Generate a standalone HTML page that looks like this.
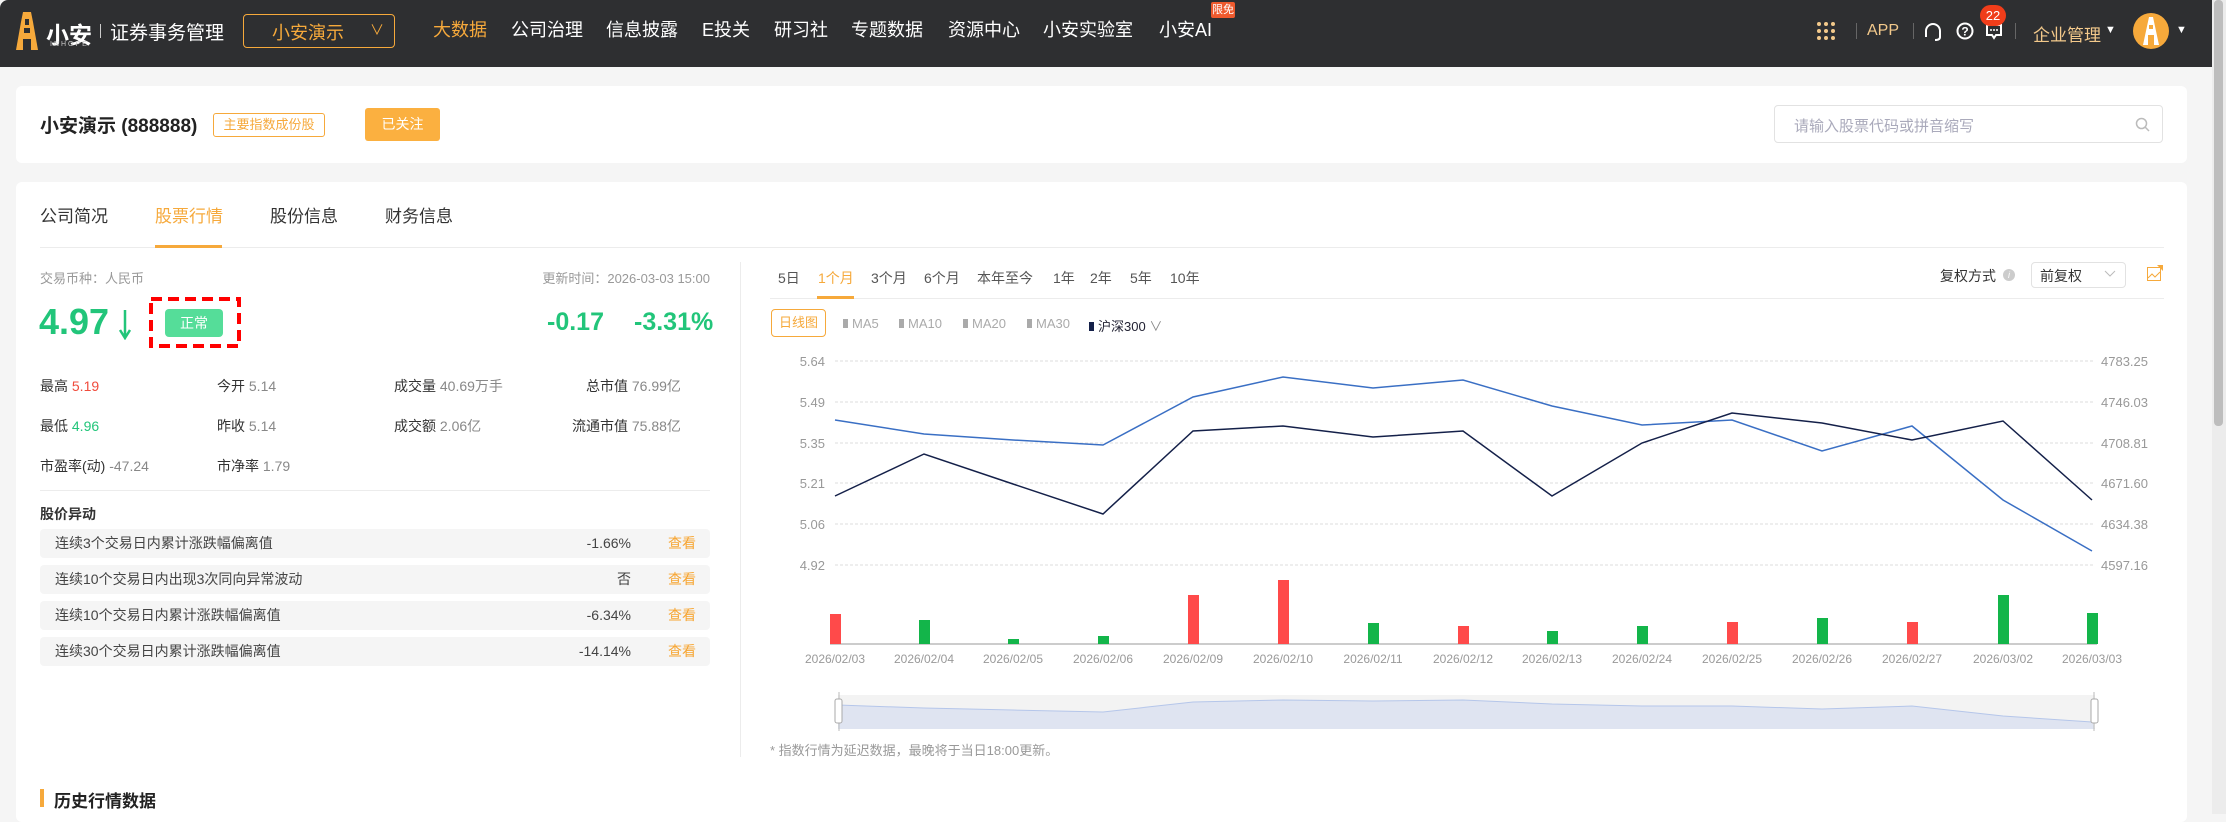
<!DOCTYPE html>
<html><head><meta charset="utf-8">
<style>
*{margin:0;padding:0;box-sizing:border-box}
body{width:2226px;height:814px;overflow:hidden;background:#f5f5f5;font-family:"Liberation Sans","Noto Sans CJK SC",sans-serif;position:relative;color:#333}
.a{position:absolute;white-space:nowrap}
.nav{position:absolute;left:0;top:0;width:2212px;height:67px;background:#2e2f31;border-radius:8px 0 0 0}
.ni{position:absolute;top:18px;font-size:18px;color:#fff;line-height:24px}
.card{position:absolute;background:#fff;border-radius:6px}
.row{position:absolute;left:40px;width:670px;height:29px;background:#f5f5f5;border-radius:4px;font-size:14px;color:#444;line-height:29px}
.row .t{position:absolute;left:15px}
.row .v{position:absolute;right:79px}
.row .k{position:absolute;right:14px;color:#f7a531}
.st{font-size:14px;color:#333;line-height:18px}
.gy{color:#888}
</style></head><body>
<div class="nav"></div>
<svg class="a" style="left:16px;top:12px" width="22" height="38" viewBox="0 0 22 38"><path d="M7 0h8l2 10 5 28H0L5 10z" fill="#f6a93b"/><rect x="9" y="7" width="4" height="6" fill="#2e2f31"/><rect x="8" y="16" width="6" height="5" fill="#2e2f31"/><rect x="7" y="27" width="8" height="11" fill="#2e2f31"/></svg>
<div class="a" style="left:46px;top:16px;font-size:23px;font-weight:bold;color:#fff">小安</div>
<div class="a" style="left:50px;top:41px;font-size:7px;color:#ccc;letter-spacing:2px">INHOPE</div>
<div class="a" style="left:100px;top:24px;width:1px;height:14px;background:#ccc"></div>
<div class="a" style="left:110px;top:18px;font-size:19px;color:#fff">证券事务管理</div>
<div class="a" style="left:243px;top:14px;width:152px;height:34px;border:1px solid #f6a93b;border-radius:4px"></div>
<div class="a" style="left:272px;top:19px;font-size:18px;color:#f6a93b">小安演示</div>
<div class="a" style="left:370px;top:20px;font-size:14px;color:#f6a93b">∨</div>
<div class="ni" style="left:433px;color:#f6a93b">大数据</div>
<div class="ni" style="left:511px">公司治理</div>
<div class="ni" style="left:606px">信息披露</div>
<div class="ni" style="left:702px">E投关</div>
<div class="ni" style="left:774px">研习社</div>
<div class="ni" style="left:851px">专题数据</div>
<div class="ni" style="left:948px">资源中心</div>
<div class="ni" style="left:1043px">小安实验室</div>
<div class="ni" style="left:1159px">小安AI</div>
<div class="a" style="left:1211px;top:2px;width:24px;height:16px;background:#ee5a2e;color:#fff;font-size:11px;line-height:16px;text-align:center;border-radius:2px">限免</div>
<svg class="a" style="left:1816px;top:21px" width="20" height="20"><g fill="#f3c98b"><circle cx="3" cy="3" r="2"/><circle cx="10" cy="3" r="2"/><circle cx="17" cy="3" r="2"/><circle cx="3" cy="10" r="2"/><circle cx="10" cy="10" r="2"/><circle cx="17" cy="10" r="2"/><circle cx="3" cy="17" r="2"/><circle cx="10" cy="17" r="2"/><circle cx="17" cy="17" r="2"/></g></svg>
<div class="a" style="left:1856px;top:23px;width:1px;height:16px;background:#666"></div>
<div class="a" style="left:1867px;top:22px;font-size:16px;color:#f3c98b">APP</div>
<div class="a" style="left:1913px;top:23px;width:1px;height:16px;background:#666"></div>
<svg class="a" style="left:1924px;top:22px" width="18" height="20"><path d="M2 12V9a7 7 0 0 1 14 0v3M2 11v4M16 11v4M16 15q0 3-5 3" stroke="#fff" stroke-width="2" fill="none"/></svg>
<svg class="a" style="left:1956px;top:22px" width="18" height="18"><circle cx="9" cy="9" r="7.5" stroke="#fff" stroke-width="2" fill="none"/><text x="9" y="13.5" font-size="12" font-weight="bold" fill="#fff" text-anchor="middle" font-family="Liberation Sans">?</text></svg>
<svg class="a" style="left:1986px;top:24px" width="16" height="16"><path d="M1 1h14v10H10l-2 3-2-3H1z" stroke="#fff" stroke-width="2" fill="none"/><g fill="#fff"><circle cx="5" cy="6" r="1"/><circle cx="8" cy="6" r="1"/><circle cx="11" cy="6" r="1"/></g></svg>
<div class="a" style="left:1980px;top:5px;width:26px;height:21px;border-radius:11px;background:#f03d1a;color:#fff;font-size:13px;line-height:21px;text-align:center">22</div>
<div class="a" style="left:2015px;top:23px;width:1px;height:16px;background:#666"></div>
<div class="a" style="left:2033px;top:21px;font-size:17px;color:#f3c98b">企业管理</div>
<div class="a" style="left:2105px;top:24px;font-size:11px;color:#fff">▼</div>
<div class="a" style="left:2133px;top:13px;width:36px;height:36px;border-radius:50%;background:#f6a93b"></div>
<svg class="a" style="left:2143px;top:17px" width="16" height="28"><path d="M6 0h4l6 28H0z" fill="#fff"/><rect x="6" y="8" width="4" height="4" fill="#f6a93b"/><rect x="5" y="18" width="6" height="10" fill="#f6a93b"/></svg>
<div class="a" style="left:2176px;top:24px;font-size:11px;color:#fff">▼</div>
<div class="a" style="left:2212px;top:0;width:14px;height:814px;background:#ececec"></div>
<div class="a" style="left:2214px;top:0;width:9px;height:426px;background:#bdbdbd;border-radius:4px"></div>

<div class="card" style="left:16px;top:86px;width:2171px;height:77px"></div>
<div class="a" style="left:40px;top:111px;font-size:19px;font-weight:bold;color:#222">小安演示 (888888)</div>
<div class="a" style="left:213px;top:113px;width:112px;height:24px;border:1px solid #f6a93b;border-radius:3px;color:#f6a93b;font-size:13px;line-height:22px;text-align:center">主要指数成份股</div>
<div class="a" style="left:365px;top:108px;width:75px;height:33px;background:#fbb040;border-radius:3px;color:#fff;font-size:14px;line-height:33px;text-align:center">已关注</div>
<div class="a" style="left:1774px;top:105px;width:389px;height:38px;border:1px solid #e2e2e2;border-radius:4px"></div>
<div class="a" style="left:1794px;top:115px;font-size:15px;color:#aab">请输入股票代码或拼音缩写</div>
<svg class="a" style="left:2135px;top:117px" width="15" height="15"><circle cx="6.5" cy="6.5" r="5" stroke="#bbb" stroke-width="1.5" fill="none"/><path d="M10 10l4 4" stroke="#bbb" stroke-width="1.5"/></svg>

<div class="card" style="left:16px;top:182px;width:2171px;height:640px"></div>
<div class="a" style="left:40px;top:202px;font-size:17px;color:#333">公司简况</div>
<div class="a" style="left:155px;top:202px;font-size:17px;color:#f6a93b">股票行情</div>
<div class="a" style="left:270px;top:202px;font-size:17px;color:#333">股份信息</div>
<div class="a" style="left:385px;top:202px;font-size:17px;color:#333">财务信息</div>
<div class="a" style="left:40px;top:247px;width:2124px;height:1px;background:#ececec"></div>
<div class="a" style="left:155px;top:245px;width:67px;height:3px;background:#f6a93b"></div>

<div class="a gy" style="left:40px;top:268px;font-size:13px;color:#999">交易币种：人民币</div>
<div class="a" style="right:1516px;top:268px;font-size:13px;color:#999">更新时间：2026-03-03 15:00</div>
<div class="a" style="left:39px;top:301px;font-size:36px;font-weight:bold;color:#22c57a">4.97</div>
<svg class="a" style="left:117px;top:310px" width="16" height="30"><path d="M8 0v27M3 20l5 8 5-8" stroke="#22c57a" stroke-width="2.5" fill="none"/></svg>
<svg class="a" style="left:149px;top:297px" width="92" height="51"><rect x="2" y="2" width="88" height="47" fill="none" stroke="#f00" stroke-width="4" stroke-dasharray="11,6"/></svg>
<div class="a" style="left:165px;top:309px;width:58px;height:28px;background:#55dd99;border-radius:4px;color:#fff;font-size:14px;line-height:28px;text-align:center">正常</div>
<div class="a" style="left:547px;top:308px;font-size:25px;font-weight:bold;color:#22c57a">-0.17</div>
<div class="a" style="left:634px;top:308px;font-size:25px;font-weight:bold;color:#22c57a">-3.31%</div>

<div class="a st" style="left:40px;top:377px">最高 <span style="color:#f04b3c">5.19</span></div>
<div class="a st" style="left:217px;top:377px">今开 <span class="gy">5.14</span></div>
<div class="a st" style="left:394px;top:377px">成交量 <span class="gy">40.69万手</span></div>
<div class="a st" style="left:586px;top:377px">总市值 <span class="gy">76.99亿</span></div>
<div class="a st" style="left:40px;top:417px">最低 <span style="color:#22c57a">4.96</span></div>
<div class="a st" style="left:217px;top:417px">昨收 <span class="gy">5.14</span></div>
<div class="a st" style="left:394px;top:417px">成交额 <span class="gy">2.06亿</span></div>
<div class="a st" style="left:572px;top:417px">流通市值 <span class="gy">75.88亿</span></div>
<div class="a st" style="left:40px;top:457px">市盈率(动) <span class="gy">-47.24</span></div>
<div class="a st" style="left:217px;top:457px">市净率 <span class="gy">1.79</span></div>
<div class="a" style="left:40px;top:490px;width:670px;height:1px;background:#ececec"></div>
<div class="a" style="left:40px;top:504px;font-size:14px;font-weight:bold;color:#333">股价异动</div>
<div class="row" style="top:529px"><span class="t">连续3个交易日内累计涨跌幅偏离值</span><span class="v">-1.66%</span><span class="k">查看</span></div>
<div class="row" style="top:565px"><span class="t">连续10个交易日内出现3次同向异常波动</span><span class="v">否</span><span class="k">查看</span></div>
<div class="row" style="top:601px"><span class="t">连续10个交易日内累计涨跌幅偏离值</span><span class="v">-6.34%</span><span class="k">查看</span></div>
<div class="row" style="top:637px"><span class="t">连续30个交易日内累计涨跌幅偏离值</span><span class="v">-14.14%</span><span class="k">查看</span></div>
<div class="a" style="left:740px;top:262px;width:1px;height:495px;background:#ececec"></div>

<div class="a" style="left:778px;top:268px;font-size:14px;color:#555">5日</div>
<div class="a" style="left:818px;top:268px;font-size:14px;color:#f6a93b">1个月</div>
<div class="a" style="left:871px;top:268px;font-size:14px;color:#555">3个月</div>
<div class="a" style="left:924px;top:268px;font-size:14px;color:#555">6个月</div>
<div class="a" style="left:977px;top:268px;font-size:14px;color:#555">本年至今</div>
<div class="a" style="left:1053px;top:268px;font-size:14px;color:#555">1年</div>
<div class="a" style="left:1090px;top:268px;font-size:14px;color:#555">2年</div>
<div class="a" style="left:1130px;top:268px;font-size:14px;color:#555">5年</div>
<div class="a" style="left:1170px;top:268px;font-size:14px;color:#555">10年</div>
<div class="a" style="left:770px;top:298px;width:1394px;height:1px;background:#ececec"></div>
<div class="a" style="left:817px;top:296px;width:37px;height:3px;background:#f6a93b"></div>
<div class="a" style="left:1940px;top:266px;font-size:14px;color:#333">复权方式</div>
<div class="a" style="left:2003px;top:269px;width:12px;height:12px;border-radius:50%;background:#ccc;color:#fff;font-size:9px;line-height:12px;text-align:center;font-style:italic">i</div>
<div class="a" style="left:2031px;top:262px;width:95px;height:26px;border:1px solid #e2e2e2;border-radius:4px"></div>
<div class="a" style="left:2040px;top:266px;font-size:14px;color:#333">前复权</div>
<svg class="a" style="left:2104px;top:270px" width="12" height="8"><path d="M1 1l5 5 5-5" stroke="#bbb" fill="none"/></svg>
<svg class="a" style="left:2147px;top:265px" width="16" height="16"><rect x="0.5" y="2.5" width="13" height="13" stroke="#f6a93b" fill="none"/><path d="M1 13l4-4 3 3 5-5" stroke="#f6a93b" fill="none"/><path d="M10 0h6v6z" fill="#f6a93b"/></svg>
<div class="a" style="left:771px;top:309px;width:55px;height:28px;border:1px solid #f6a93b;border-radius:4px;color:#f6a93b;font-size:13px;line-height:26px;text-align:center">日线图</div>
<div class="a" style="left:843px;top:316px;font-size:13px;color:#aaa"><span style="display:inline-block;width:5px;height:9px;background:#aaa;margin-right:4px"></span>MA5</div>
<div class="a" style="left:899px;top:316px;font-size:13px;color:#aaa"><span style="display:inline-block;width:5px;height:9px;background:#aaa;margin-right:4px"></span>MA10</div>
<div class="a" style="left:963px;top:316px;font-size:13px;color:#aaa"><span style="display:inline-block;width:5px;height:9px;background:#aaa;margin-right:4px"></span>MA20</div>
<div class="a" style="left:1027px;top:316px;font-size:13px;color:#aaa"><span style="display:inline-block;width:5px;height:9px;background:#aaa;margin-right:4px"></span>MA30</div>
<div class="a" style="left:1089px;top:316px;font-size:13px;color:#223"><span style="display:inline-block;width:5px;height:9px;background:#142049;margin-right:4px"></span>沪深300 <span style="color:#888">∨</span></div>

<svg class="a" style="left:0;top:0" width="2226" height="814">
<g stroke="#ddd" stroke-dasharray="3,2" stroke-width="1">
<line x1="835" y1="361" x2="2094" y2="361"/><line x1="835" y1="402" x2="2094" y2="402"/><line x1="835" y1="443" x2="2094" y2="443"/><line x1="835" y1="483" x2="2094" y2="483"/><line x1="835" y1="524" x2="2094" y2="524"/><line x1="835" y1="565" x2="2094" y2="565"/>
</g>
<g font-family="Liberation Sans" font-size="13" fill="#999" text-anchor="end">
<text x="825" y="366">5.64</text><text x="825" y="407">5.49</text><text x="825" y="448">5.35</text><text x="825" y="488">5.21</text><text x="825" y="529">5.06</text><text x="825" y="570">4.92</text>
</g>
<g font-family="Liberation Sans" font-size="13" fill="#999">
<text x="2101" y="366">4783.25</text><text x="2101" y="407">4746.03</text><text x="2101" y="448">4708.81</text><text x="2101" y="488">4671.60</text><text x="2101" y="529">4634.38</text><text x="2101" y="570">4597.16</text>
</g>
<polyline fill="none" stroke="#3a6fc4" stroke-width="1.5" points="835,420 924,434 1013,440 1103,445 1193,397 1283,377 1373,388 1463,380 1552,406 1642,425 1732,420 1822,451 1912,426 2003,500 2092,551"/>
<polyline fill="none" stroke="#142049" stroke-width="1.5" points="835,496 924,454 1013,484 1103,514 1193,431 1283,426 1373,437 1463,431 1552,496 1642,443 1732,413 1822,423 1912,440 2003,421 2092,500"/>
<line x1="830" y1="644" x2="2097" y2="644" stroke="#ccc" stroke-width="2"/>
<g>
<rect x="830" y="614" width="11" height="30" fill="#ff4a4a"/>
<rect x="919" y="620" width="11" height="24" fill="#13b54a"/>
<rect x="1008" y="639" width="11" height="5" fill="#13b54a"/>
<rect x="1098" y="636" width="11" height="8" fill="#13b54a"/>
<rect x="1188" y="595" width="11" height="49" fill="#ff4a4a"/>
<rect x="1278" y="580" width="11" height="64" fill="#ff4a4a"/>
<rect x="1368" y="623" width="11" height="21" fill="#13b54a"/>
<rect x="1458" y="626" width="11" height="18" fill="#ff4a4a"/>
<rect x="1547" y="631" width="11" height="13" fill="#13b54a"/>
<rect x="1637" y="626" width="11" height="18" fill="#13b54a"/>
<rect x="1727" y="622" width="11" height="22" fill="#ff4a4a"/>
<rect x="1817" y="618" width="11" height="26" fill="#13b54a"/>
<rect x="1907" y="622" width="11" height="22" fill="#ff4a4a"/>
<rect x="1998" y="595" width="11" height="49" fill="#13b54a"/>
<rect x="2087" y="613" width="11" height="31" fill="#13b54a"/>
</g>
<g font-family="Liberation Sans" font-size="12" fill="#999" text-anchor="middle">
<text x="835" y="663">2026/02/03</text><text x="924" y="663">2026/02/04</text><text x="1013" y="663">2026/02/05</text><text x="1103" y="663">2026/02/06</text><text x="1193" y="663">2026/02/09</text><text x="1283" y="663">2026/02/10</text><text x="1373" y="663">2026/02/11</text><text x="1463" y="663">2026/02/12</text><text x="1552" y="663">2026/02/13</text><text x="1642" y="663">2026/02/24</text><text x="1732" y="663">2026/02/25</text><text x="1822" y="663">2026/02/26</text><text x="1912" y="663">2026/02/27</text><text x="2003" y="663">2026/03/02</text><text x="2092" y="663">2026/03/03</text>
</g>
<rect x="838" y="695" width="1257" height="34" fill="#f3f3f3"/>
<path d="M838 705 L924 708 L1013 710 L1103 712 L1193 702 L1283 700 L1373 701 L1463 700 L1552 704 L1642 706 L1732 706 L1822 709 L1912 706 L2003 716 L2092 722 L2095 729 L838 729Z" fill="#dfe4f1" stroke="none"/>
<polyline fill="none" stroke="#b5c6ea" points="838,705 924,708 1013,710 1103,712 1193,702 1283,700 1373,701 1463,700 1552,704 1642,706 1732,706 1822,709 1912,706 2003,716 2092,722"/>
<line x1="839" y1="692" x2="839" y2="731" stroke="#bbb"/><line x1="2094" y1="692" x2="2094" y2="731" stroke="#bbb"/>
<rect x="835" y="699" width="7" height="24" rx="2" fill="#fff" stroke="#aaa"/>
<rect x="2091" y="699" width="7" height="24" rx="2" fill="#fff" stroke="#aaa"/>
</svg>
<div class="a" style="left:770px;top:740px;font-size:13px;color:#999">* 指数行情为延迟数据，最晚将于当日18:00更新。</div>
<div class="a" style="left:40px;top:789px;width:4px;height:18px;background:#f6a93b"></div>
<div class="a" style="left:54px;top:787px;font-size:17px;font-weight:bold;color:#222">历史行情数据</div>
</body></html>
